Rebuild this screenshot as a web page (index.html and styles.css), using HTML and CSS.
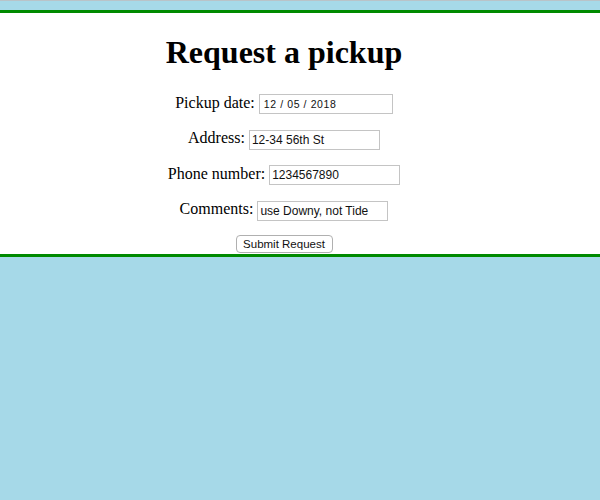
FILE: index.html
```html
<!DOCTYPE html>
<html>
<head>
<meta charset="utf-8">
<title>Request a pickup</title>
<link rel="stylesheet" href="styles.css">
</head>
<body>
<div class="topline"></div>
<section class="panel">
  <h1 class="title">Request a pickup</h1>
  <form class="form">
    <p class="row">Pickup date: <input class="field date" type="text" value="12 / 05 / 2018"></p>
    <p class="row">Address: <input class="field" type="text" value="12-34 56th St"></p>
    <p class="row">Phone number: <input class="field" type="text" value="1234567890"></p>
    <p class="row">Comments: <input class="field" type="text" value="use Downy, not Tide"></p>
    <button class="submit" type="button">Submit Request</button>
  </form>
</section>
</body>
</html>
```
FILE: styles.css
```css
html {
  background: #a6d9e8;
}
body {
  margin: 0;
  font-family: "Liberation Serif", "Times New Roman", serif;
  font-size: 16px;
  color: #000;
}
.topline {
  height: 1px;
  background: #b9c3c8;
  margin-bottom: 9px;
}
.panel {
  background: #fff;
  border-top: 3px solid #008a00;
  border-bottom: 3px solid #008a00;
  padding-right: 32px;
  text-align: center;
}
.title {
  margin: 0;
  padding-top: 21px;
  font-size: 32px;
  font-weight: bold;
  line-height: 37px;
}
.form {
  margin: 0;
  padding-top: 22px;
  line-height: 20px;
}
.row {
  height: 20px;
  margin: 0 0 15.4px;
}
.field {
  box-sizing: border-box;
  width: 131px;
  height: 20px;
  border: 1px solid #c4c4c4;
  padding: 0 2px;
  font-family: "Liberation Sans", Arial, sans-serif;
  font-size: 12px;
  color: #111;
  vertical-align: middle;
  background: #fff;
}
.date {
  width: 134px;
  padding-left: 4px;
  font-size: 10.5px;
  letter-spacing: 0.6px;
}
.submit {
  display: block;
  margin: 0 auto 1px;
  box-sizing: border-box;
  width: 97px;
  height: 18px;
  padding: 0;
  border: 1px solid #b0b0b0;
  border-radius: 4px;
  background: #fff;
  font-family: "Liberation Sans", Arial, sans-serif;
  font-size: 11.5px;
  color: #111;
  line-height: 16px;
}
```
